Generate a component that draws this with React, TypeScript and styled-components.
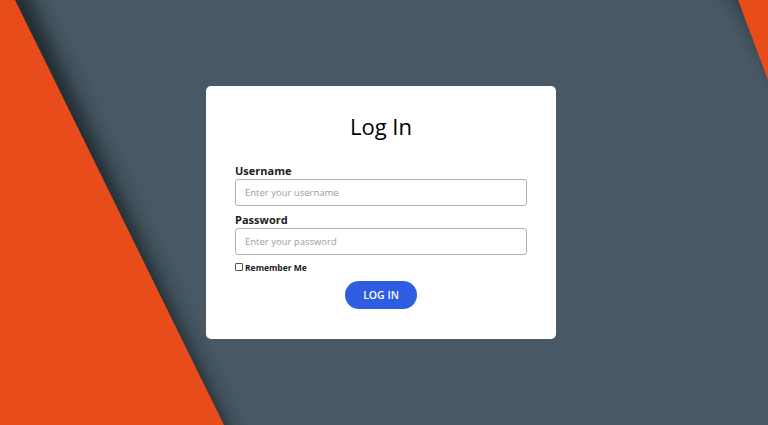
import styled, { createGlobalStyle } from "styled-components";

const GlobalStyle = createGlobalStyle`
  html, body {
    margin: 0;
    padding: 0;
    height: 100%;
  }
  body {
    font-family: "Open Sans", "Noto Sans", sans-serif;
    background: #485864;
    overflow: hidden;
  }
  * {
    box-sizing: border-box;
  }
`;

const Page = styled.div`
  position: relative;
  width: 100vw;
  height: 100vh;
  display: flex;
  align-items: center;
  justify-content: center;
  padding: 0 6px 1px 0;
`;

const Backdrop = styled.svg`
  position: absolute;
  inset: 0;
  width: 100%;
  height: 100%;
  z-index: 0;
`;

const Card = styled.form`
  position: relative;
  z-index: 1;
  width: 350px;
  background: #ffffff;
  border-radius: 5px;
  padding: 25px 29px 30px;
  display: flex;
  flex-direction: column;
`;

const Title = styled.h1`
  margin: 0 0 22px;
  font-size: 22px;
  line-height: 30px;
  font-weight: 400;
  color: #000;
  text-align: center;
`;

const Label = styled.label<{ $first?: boolean }>`
  display: block;
  margin-top: ${(p) => (p.$first ? "0" : "6px")};
  margin-bottom: 1px;
  font-size: 11px;
  line-height: 15px;
  font-weight: 700;
  color: #1c1c1c;
`;

const TextInput = styled.input`
  width: 100%;
  height: 27px;
  border: 1px solid #b3b3b3;
  border-radius: 3px;
  padding: 0 9px;
  font-family: inherit;
  font-size: 9.5px;
  color: #333;
  outline: none;
  &::placeholder {
    color: #9c9c9c;
  }
`;

const RememberRow = styled.label`
  display: flex;
  align-items: center;
  gap: 2px;
  margin-top: 6px;
  height: 13px;
  font-size: 8.5px;
  font-weight: 700;
  color: #1c1c1c;
`;

const Check = styled.input`
  appearance: none;
  margin: 0;
  width: 8px;
  height: 8px;
  border: 1px solid #555;
  border-radius: 1px;
  background: #fff;
`;

const SubmitButton = styled.button`
  align-self: center;
  margin-top: 7px;
  width: 72px;
  height: 28px;
  border: none;
  border-radius: 14px;
  background: #2e5de2;
  color: #fff;
  font-family: inherit;
  font-size: 10.5px;
  font-weight: 600;
  cursor: pointer;
`;

const App = () => {
  return (
    <>
      <GlobalStyle />
      <Page>
        <Backdrop viewBox="0 0 768 425" preserveAspectRatio="none">
          <defs>
            <filter id="soft" x="-20%" y="-20%" width="140%" height="140%">
              <feGaussianBlur stdDeviation="9" />
            </filter>
          </defs>
          <polygon
            points="-40,-20 22,-20 236,445 -40,445"
            fill="#1a252c"
            opacity="0.9"
            filter="url(#soft)"
          />
          <polygon points="0,0 15,0 224,425 0,425" fill="#e84c1b" />
          <polygon
            points="726,-20 790,-20 790,95"
            fill="#1a252c"
            opacity="0.85"
            filter="url(#soft)"
          />
          <polygon points="738,0 768,0 768,80" fill="#e84c1b" />
        </Backdrop>
        <Card onSubmit={(e) => e.preventDefault()}>
          <Title>Log In</Title>
          <Label $first htmlFor="username">
            Username
          </Label>
          <TextInput id="username" placeholder="Enter your username" />
          <Label htmlFor="password">Password</Label>
          <TextInput
            id="password"
            type="password"
            placeholder="Enter your password"
          />
          <RememberRow>
            <Check type="checkbox" />
            Remember Me
          </RememberRow>
          <SubmitButton type="submit">LOG IN</SubmitButton>
        </Card>
      </Page>
    </>
  );
};

export default App;
